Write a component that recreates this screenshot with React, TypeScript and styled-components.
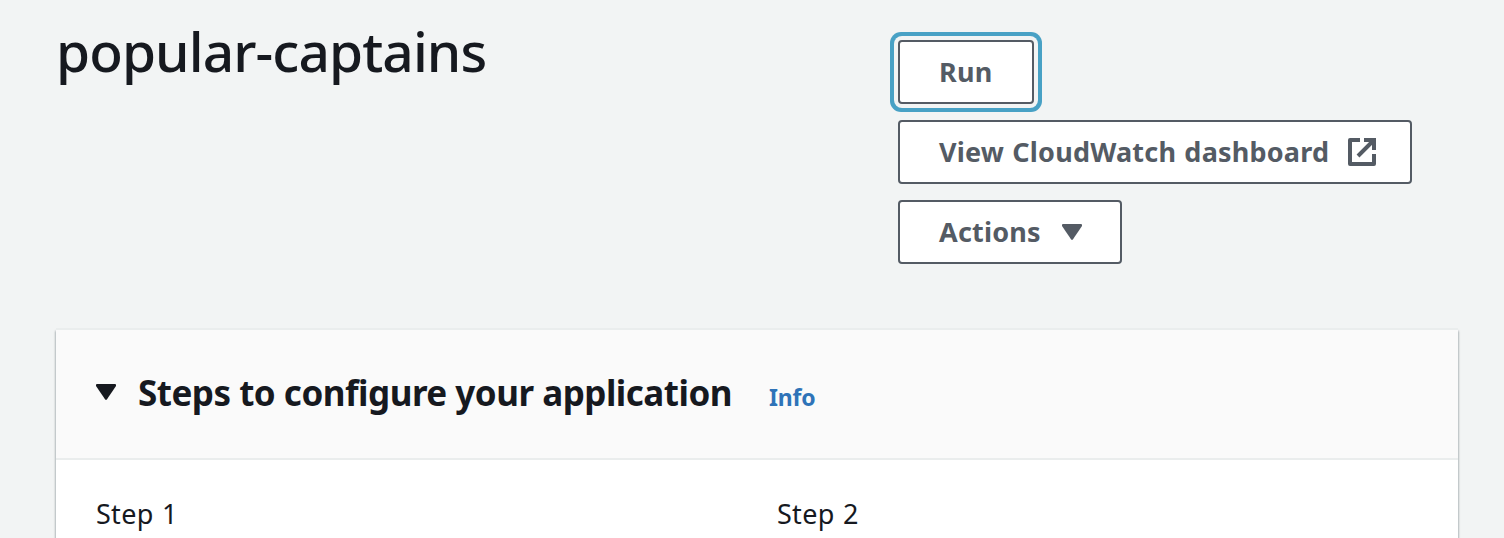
import React from 'react';
import styled, { createGlobalStyle } from 'styled-components';

const GlobalStyle = createGlobalStyle`
  * { box-sizing: border-box; }
  body { margin: 0; background: #f2f4f4; overflow: hidden; font-family: "Noto Sans", "Open Sans", sans-serif; color: #16191f; }
`;

const Page = styled.main`
  height: 538px;
  overflow: hidden;
  padding: 0 45px 0 55px;
`;
const Header = styled.header`
  display: flex;
  height: 328px;
`;
const Title = styled.h1`
  margin: 16px 0 0 1px;
  width: 834px;
  font-size: 55px;
  line-height: 70px;
  font-weight: 500;
  letter-spacing: -0.9px;
  white-space: nowrap;
`;
const Actions = styled.div`
  display: flex;
  flex-direction: column;
  align-items: flex-start;
  gap: 16px;
  padding-top: 40px;
  margin-left: 8px;
`;
const Button = styled.button<{ $focused?: boolean }>`
  display: flex;
  align-items: center;
  justify-content: space-between;
  height: 64px;
  padding: 0 34px 0 39px;
  border: 2px solid #545b64;
  border-radius: 4px;
  background: #fff;
  color: #545b64;
  font: 700 27px/40px "Noto Sans", sans-serif;
  letter-spacing: 0.2px;
  word-spacing: 1px;
  white-space: nowrap;
  box-shadow: ${p => (p.$focused ? '0 0 0 4px #f2f4f4, 0 0 0 8px #48a1c5' : 'none')};
  svg { flex: none; }
`;
const RunButton = styled(Button)`
  width: 136px;
`;
const DashboardButton = styled(Button)`
  width: 514px;
`;
const MenuButton = styled(Button)`
  width: 224px;
  padding-right: 38px;
`;
const Panel = styled.section`
  width: 1402px;
  height: 260px;
  margin-left: 1px;
  background: #fff;
  border-top: 2px solid #eaeded;
  box-shadow: 0 3px 2px rgba(0, 28, 36, 0.3), 1px 3px 2px rgba(0, 28, 36, 0.15), -1px 3px 2px rgba(0, 28, 36, 0.15);
`;
const PanelHeader = styled.div`
  display: flex;
  align-items: baseline;
  height: 130px;
  padding: 41px 0 0 40px;
  background: #fafafa;
  border-bottom: 2px solid #eaeded;
`;
const Toggle = styled.span`
  display: flex;
  align-self: flex-start;
  margin-top: 13px;
`;
const Heading = styled.h2`
  margin: 0 0 0 22px;
  font-size: 35px;
  line-height: 44px;
  letter-spacing: -0.5px;
`;
const Info = styled.a`
  margin-left: 37px;
  color: #2e73b8;
  font-size: 23px;
  font-weight: 700;
  letter-spacing: -0.2px;
`;
const Steps = styled.div`
  display: grid;
  grid-template-columns: 681px 1fr;
  padding: 34px 40px;
  font-size: 27px;
  line-height: 40px;
  letter-spacing: 0.3px;
  word-spacing: 1px;
`;

const Caret = () => (
  <svg width="20" height="16" viewBox="0 0 20 16" fill="currentColor">
    <path d="M1 0h18q1 0 1 1v1L11 15.3q-1 1.2-2 0L0 2V1q0-1 1-1z" />
  </svg>
);

export default function App() {
  return (
    <Page>
      <GlobalStyle />
      <Header>
        <Title>popular-captains</Title>
        <Actions>
          <RunButton $focused>Run</RunButton>
          <DashboardButton>
            View CloudWatch dashboard
            <svg width="28" height="28" viewBox="0 0 28 28" fill="none" stroke="currentColor" strokeWidth="4">
              <path d="M12 2H2v24h24V16" strokeLinejoin="round" />
              <path d="M16 2h10v10M25 3 10 18" />
            </svg>
          </DashboardButton>
          <MenuButton>
            Actions
            <Caret />
          </MenuButton>
        </Actions>
      </Header>
      <Panel>
        <PanelHeader>
          <Toggle><Caret /></Toggle>
          <Heading>Steps to configure your application</Heading>
          <Info>Info</Info>
        </PanelHeader>
        <Steps><span>Step 1</span><span>Step 2</span></Steps>
      </Panel>
    </Page>
  );
}
